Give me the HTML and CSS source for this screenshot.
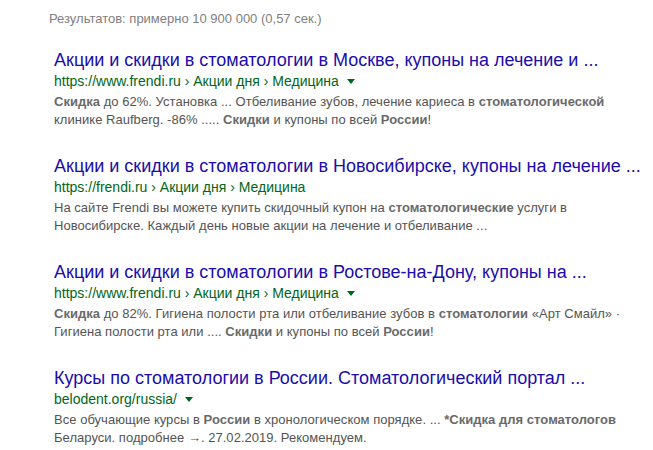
FILE: index.html
```html
<!DOCTYPE html>
<html lang="ru">
<head>
<meta charset="utf-8">
<link rel="stylesheet" href="styles.css">
</head>
<body>
<div class="page">
  <div class="stats">Результатов: примерно 10 900 000 (0,57 сек.)</div>
  <div class="results">
    <div class="result">
      <div class="title">Акции и скидки в стоматологии в Москве, купоны на лечение и ...</div>
      <div class="url">https://www.frendi.ru › Акции дня › Медицина<span class="arrow"></span></div>
      <div class="snippet"><b>Скидка</b> до 62%. Установка ... Отбеливание зубов, лечение кариеса в <b>стоматологической</b><br>клинике Raufberg. -86% ..... <b>Скидки</b> и купоны по всей <b>России</b>!</div>
    </div>
    <div class="result">
      <div class="title">Акции и скидки в стоматологии в Новосибирске, купоны на лечение ...</div>
      <div class="url">https://frendi.ru › Акции дня › Медицина</div>
      <div class="snippet">На сайте Frendi вы можете купить скидочный купон на <b>стоматологические</b> услуги в<br>Новосибирске. Каждый день новые акции на лечение и отбеливание ...</div>
    </div>
    <div class="result">
      <div class="title">Акции и скидки в стоматологии в Ростове-на-Дону, купоны на ...</div>
      <div class="url">https://www.frendi.ru › Акции дня › Медицина<span class="arrow"></span></div>
      <div class="snippet"><b>Скидка</b> до 82%. Гигиена полости рта или отбеливание зубов в <b>стоматологии</b> «Арт Смайл» ·<br>Гигиена полости рта или .... <b>Скидки</b> и купоны по всей <b>России</b>!</div>
    </div>
    <div class="result">
      <div class="title">Курсы по стоматологии в России. Стоматологический портал ...</div>
      <div class="url">belodent.org/russia/<span class="arrow"></span></div>
      <div class="snippet">Все обучающие курсы в <b>России</b> в хронологическом порядке. ... <b>*Скидка для стоматологов</b><br>Беларуси. подробнее →. 27.02.2019. Рекомендуем.</div>
    </div>
  </div>
</div>
</body>
</html>
```
FILE: styles.css
```css
html, body {
  margin: 0;
  padding: 0;
  background: #ffffff;
}
.page {
  font-family: "Liberation Sans", Arial, sans-serif;
  padding-top: 10px;
}
.stats {
  padding-left: 49px;
  font-size: 13px;
  line-height: 18px;
  color: #808080;
}
.results {
  padding-left: 54px;
  padding-top: 20px;
}
.result {
  margin-bottom: 25px;
}
.title {
  font-size: 18px;
  line-height: 24px;
  color: #1a0dab;
  white-space: nowrap;
}
.url {
  font-size: 14px;
  line-height: 18px;
  color: #006621;
  white-space: nowrap;
}
.arrow {
  display: inline-block;
  margin-left: 8px;
  vertical-align: 2px;
  border-top: 5px solid #006621;
  border-left: 4px solid transparent;
  border-right: 4px solid transparent;
}
.snippet {
  margin-top: 3px;
  font-size: 13px;
  line-height: 18px;
  color: #545454;
  white-space: nowrap;
  letter-spacing: 0.03px;
}
.snippet b {
  color: #6a6a6a;
}
```
